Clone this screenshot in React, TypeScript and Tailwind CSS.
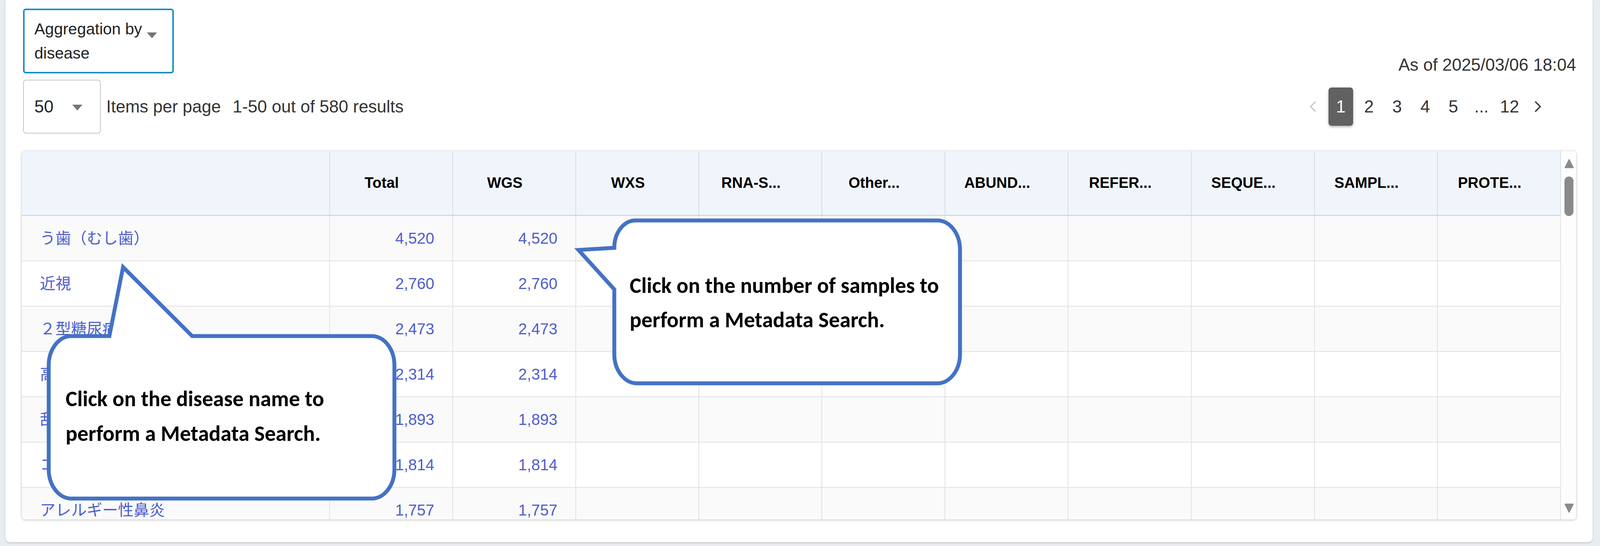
import { ChevronLeft, ChevronRight } from 'lucide-react'

const rows = [
  ['う歯（むし歯）', '4,520'],
  ['近視', '2,760'],
  ['２型糖尿病', '2,473'],
  ['高血圧症', '2,314'],
  ['乱視', '1,893'],
  ['コロナウイルス感染症', '1,814'],
  ['アレルギー性鼻炎', '1,757'],
]

const heads = ['Total', 'WGS', 'WXS', 'RNA-S...', 'Other...', 'ABUND...', 'REFER...', 'SEQUE...', 'SAMPL...', 'PROTE...']

function DropArrow({ className }: { className?: string }) {
  return (
    <svg viewBox="0 0 26 15" className={className}>
      <path d="M0 0 L26 0 L13 15 Z" fill="#757575" />
    </svg>
  )
}

export default function App() {
  return (
    <div className="relative w-full h-[1398px] overflow-hidden bg-[#e9edf2] pl-[14px] pr-[19px] font-['Liberation_Sans','Noto_Sans_CJK_JP',sans-serif] text-[#333]">
      {/* Card */}
      <div className="h-[1388px] bg-white rounded-b-[12px] shadow-[0_2px_4px_rgba(0,0,0,0.18)] pl-[45px] pr-[42px] pt-[22px]">
        {/* Aggregation select + timestamp */}
        <div className="flex justify-between h-[166px]">
          <div className="flex items-start w-[386px] h-[166px] border-[4px] border-[#1a8fc8] rounded-[7px] pl-[25px] pt-[17px]">
            <div className="w-[282px] text-[41px] leading-[62px] text-[#222]">Aggregation by disease</div>
            <DropArrow className="w-[26px] h-[15px] ml-[6px] mt-[40px]" />
          </div>
          <div className="self-end text-[44px] leading-none">As of 2025/03/06 18:04</div>
        </div>

        {/* Page size + pagination */}
        <div className="flex items-center mt-[16px] h-[138px]">
          <div className="flex items-center w-[199px] h-[138px] border-2 border-[#c8c8c8] rounded-[8px] pl-[27px]">
            <span className="text-[44px] leading-none text-[#222]">50</span>
            <DropArrow className="w-[26px] h-[15px] ml-[48px] mt-[4px]" />
          </div>
          <span className="ml-[14px] text-[44px] leading-none">Items per page</span>
          <span className="ml-[30px] text-[44px] leading-none">1-50 out of 580 results</span>

          <div className="ml-auto mr-[67px] flex items-center gap-[9px] text-[44px]">
            <div className="w-[63px] h-[98px] flex items-center justify-center">
              <ChevronLeft className="w-[48px] h-[62px] text-[#c0c0c0]" strokeWidth={1.4} />
            </div>
            <div className="w-[63px] h-[98px] flex items-center justify-center rounded-[8px] bg-[#616161] text-white shadow-[0_3px_6px_rgba(0,0,0,0.3)]">1</div>
            {['2', '3', '4', '5', '...', '12'].map(p => (
              <div key={p} className="w-[63px] h-[98px] flex items-center justify-center">{p}</div>
            ))}
            <div className="w-[63px] h-[98px] flex items-center justify-center">
              <ChevronRight className="w-[48px] h-[62px] text-[#333]" strokeWidth={1.6} />
            </div>
          </div>
        </div>

        {/* Table */}
        <div className="mt-[45px] ml-[-3px] h-[943px] flex rounded-[8px] overflow-hidden shadow-[0_1px_6px_rgba(0,0,0,0.28)] bg-white">
          <div className="flex-1 min-w-0 overflow-hidden">
            <div className="grid grid-cols-[1021fr_repeat(10,408fr)] h-[166px] bg-[#f0f5fc] border-b-[3px] border-[#d4d7dc]">
              <div className="border-r-2 border-[#d8dde5]" />
              {heads.map(h => (
                <div key={h} className="flex items-center justify-center pr-[48px] border-r-2 border-[#d8dde5] text-[38px] font-bold text-black whitespace-nowrap overflow-hidden">
                  {h}
                </div>
              ))}
            </div>
            {rows.map(([name, n], i) => (
              <div
                key={name}
                className={`grid grid-cols-[1021fr_repeat(10,408fr)] h-[116px] border-b-2 border-[#e2e2e2] text-[40px] text-[#4d5dcf] ${i % 2 === 0 ? 'bg-[#fafafa]' : 'bg-white'}`}
              >
                <div className="flex items-center pl-[46px] border-r-2 border-[#e2e2e2] whitespace-nowrap overflow-hidden">{name}</div>
                <div className="flex items-center justify-end pr-[46px] border-r-2 border-[#e2e2e2]">{n}</div>
                <div className="flex items-center justify-end pr-[46px] border-r-2 border-[#e2e2e2]">{n}</div>
                {Array.from({ length: 8 }).map((_, j) => (
                  <div key={j} className="border-r-2 border-[#e2e2e2]" />
                ))}
              </div>
            ))}
          </div>

          {/* Scrollbar */}
          <div className="w-[39px] flex flex-col items-start pl-[9px] bg-[#fdfdfd]">
            <svg viewBox="0 0 24 24" className="w-[24px] h-[24px] mt-[20px]">
              <path d="M12 2 L22 22 L2 22 Z" fill="#8a8a8a" stroke="#8a8a8a" strokeWidth="3" strokeLinejoin="round" />
            </svg>
            <div className="w-[23px] h-[101px] mt-[21px] rounded-full bg-[#8a8a8a]" />
            <div className="flex-1" />
            <svg viewBox="0 0 24 24" className="w-[24px] h-[24px] mb-[17px]">
              <path d="M2 2 L22 2 L12 22 Z" fill="#8a8a8a" stroke="#8a8a8a" strokeWidth="3" strokeLinejoin="round" />
            </svg>
          </div>
        </div>
      </div>

      {/* Callouts */}
      <svg className="absolute left-0 top-0 w-[2600px] h-[1398px] pointer-events-none" viewBox="0 0 2600 1398">
        <path
          d="M280 860.5 L315 684 L492 860.5 L951.7 860.5 A58 75 0 0 1 1009.7 935.5 L1009.7 1201.5 A58 75 0 0 1 951.7 1276.5 L182.7 1276.5 A58 75 0 0 1 124.7 1201.5 L124.7 935.5 A58 75 0 0 1 182.7 860.5 Z"
          fill="white"
          stroke="#4472c4"
          strokeWidth="10"
        />
        <path
          d="M1572.6 634.5 L1481 640 L1572.6 741 L1572.6 906.5 A58 75 0 0 0 1630.6 981.5 L2399.6 981.5 A58 75 0 0 0 2457.6 906.5 L2457.6 639.5 A58 75 0 0 0 2399.6 564.5 L1626.6 564.5 A54 70 0 0 0 1572.6 634.5 Z"
          fill="white"
          stroke="#4472c4"
          strokeWidth="10"
        />
      </svg>
      <div className="absolute left-[168px] top-[977px] font-['Carlito','Lato',sans-serif] font-bold text-[56px] leading-[89px] text-black whitespace-nowrap">
        Click on the disease name to
        <br />
        perform a Metadata Search.
      </div>
      <div className="absolute left-[1612px] top-[687px] font-['Carlito','Lato',sans-serif] font-bold text-[56px] leading-[88px] text-black whitespace-nowrap">
        Click on the number of samples to
        <br />
        perform a Metadata Search.
      </div>
    </div>
  )
}
